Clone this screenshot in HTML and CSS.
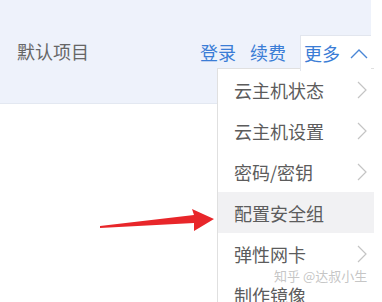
FILE: index.html
```html
<!DOCTYPE html>
<html lang="zh">
<head>
<meta charset="utf-8">
<link rel="stylesheet" href="styles.css">
</head>
<body>
<div class="page">
  <div class="header">
    <div class="title">默认项目</div>
    <div class="actions">
      <a class="link">登录</a>
      <a class="link">续费</a>
      <div class="more">
        <span class="link">更多</span>
        <svg class="up" width="18" height="10" viewBox="0 0 18 10"><path d="M1 9 L9 1 L17 9" fill="none" stroke="#4a86d6" stroke-width="1.4"/></svg>
      </div>
    </div>
  </div>
  <div class="menu">
    <div class="item"><span>云主机状态</span><svg class="chev" width="10" height="18" viewBox="0 0 10 18"><path d="M1 1 L9 9 L1 17" fill="none" stroke="#c4c4c4" stroke-width="1.2"/></svg></div>
    <div class="item"><span>云主机设置</span><svg class="chev" width="10" height="18" viewBox="0 0 10 18"><path d="M1 1 L9 9 L1 17" fill="none" stroke="#c4c4c4" stroke-width="1.2"/></svg></div>
    <div class="item"><span>密码/密钥</span><svg class="chev" width="10" height="18" viewBox="0 0 10 18"><path d="M1 1 L9 9 L1 17" fill="none" stroke="#c4c4c4" stroke-width="1.2"/></svg></div>
    <div class="item active"><span>配置安全组</span></div>
    <div class="item"><span>弹性网卡</span><svg class="chev" width="10" height="18" viewBox="0 0 10 18"><path d="M1 1 L9 9 L1 17" fill="none" stroke="#c4c4c4" stroke-width="1.2"/></svg></div>
    <div class="item"><span>制作镜像</span></div>
  </div>
  <svg class="arrow" width="382" height="302" viewBox="0 0 382 302"><polygon points="100,226 194,215 192,209 214,219 194,231 194,223 100,228" fill="#e8262a"/></svg>
  <div class="watermark">知乎 @达叔小生</div>
</div>
</body>
</html>
```
FILE: styles.css
```css
html, body {
  margin: 0;
  padding: 0;
  background: #ffffff;
}
body {
  font-family: "Noto Sans CJK SC", "Noto Sans", sans-serif;
  width: 382px;
  height: 302px;
  overflow: hidden;
}
.page {
  position: relative;
  width: 382px;
  height: 302px;
}
.header {
  width: 371px;
  height: 104px;
  background: #eef2fb;
  border-bottom: 1px solid #e3e8f1;
  display: flex;
  align-items: center;
  justify-content: space-between;
  box-sizing: border-box;
}
.title {
  margin-left: 17px;
  font-size: 18px;
  color: #666;
  line-height: 24px;
  margin-top: -2px;
}
.actions {
  display: flex;
  align-items: center;
  height: 100%;
}
.link {
  font-size: 18px;
  color: #3b7dd6;
  line-height: 24px;
}
.actions > .link {
  margin-right: 14px;
}
.more {
  position: relative;
  z-index: 2;
  width: 71px;
  height: 36px;
  margin-top: 2px;
  box-sizing: border-box;
  background: #fff;
  border-left: 1px solid #e2e6ee;
  border-top: 1px solid #e2e6ee;
  display: flex;
  align-items: center;
  padding-left: 3px;
  gap: 10px;
}
.more .up {
  margin-top: 1px;
}
.menu {
  position: absolute;
  left: 217px;
  top: 68px;
  width: 156px;
  background: #fff;
  border-left: 1px solid #e0e0e0;
  border-top: 1px solid #e0e0e0;
  z-index: 1;
}
.item {
  height: 41px;
  display: flex;
  align-items: center;
  justify-content: space-between;
  padding-left: 16px;
  padding-right: 7px;
  font-size: 18px;
  color: #5c5c5c;
}
.item.active {
  background: #f1f1f3;
}
.arrow {
  position: absolute;
  left: 0;
  top: 0;
  z-index: 3;
  pointer-events: none;
}
.watermark {
  position: absolute;
  left: 274px;
  top: 267px;
  font-size: 13px;
  color: rgba(190, 190, 190, 0.9);
  z-index: 4;
  line-height: 18px;
}
```
